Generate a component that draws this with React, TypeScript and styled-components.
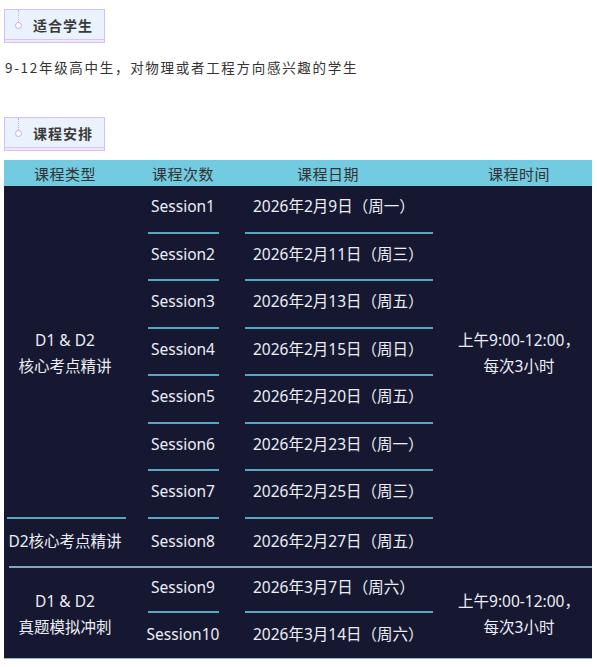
import { createGlobalStyle } from "styled-components";
import styled from "styled-components";

const GlobalStyle = createGlobalStyle`
  body {
    margin: 0;
    background: #ffffff;
    font-family: "Noto Sans CJK SC", "Noto Sans", sans-serif;
  }
`;

const Page = styled.div`
  width: 597px;
  box-sizing: border-box;
  padding: 9px 5px 9px 4px;
`;

// section heading with the little dotted marker
const TitleBox = styled.div`
  width: 101px;
  height: 34px;
  box-sizing: border-box;
  border: 1px solid #d5bff6;
  background: linear-gradient(
    to bottom,
    #eaf3fd calc(100% - 3px),
    #d9c4f7 calc(100% - 3px),
    #d9c4f7 calc(100% - 2px),
    #f4e8fc calc(100% - 2px)
  );
  display: flex;
  align-items: flex-start;
  gap: 11px;
  padding-left: 10px;
`;

const Marker = styled.div`
  display: flex;
  flex-direction: column;
  align-items: center;
  width: 7px;
`;

const DotLine = styled.div`
  width: 0;
  height: 12px;
  border-left: 1px dotted #c9a9f2;
`;

const Ring = styled.div`
  width: 7px;
  height: 7px;
  box-sizing: border-box;
  border-radius: 50%;
  border: 1px solid #c9a9f2;
  background: #ffffff;
`;

const TitleText = styled.div`
  margin-top: 5px;
  font-size: 14px;
  font-weight: bold;
  letter-spacing: 1px;
  color: #3a3a3a;
  line-height: 20px;
`;

const Intro = styled.p`
  margin: 13px 0 39px 1px;
  font-size: 13.5px;
  line-height: 22px;
  letter-spacing: 1.7px;
  color: #333333;
`;

const Table = styled.div`
  margin-top: 9px;
  display: grid;
  grid-template-columns: 122px 114px 206px 146px;
  grid-template-rows: 26px repeat(8, 47.5px) 2px 45px 45px;
  background: #161832;
  border-bottom: 1px solid #8fb9cc;
  color: #eceef4;
  font-family: "Noto Sans", "Noto Sans CJK SC", sans-serif;
  font-size: 15.5px;
`;

const HeadCell = styled.div<{ $shift?: number }>`
  background: #72cbe0;
  color: #333333;
  display: flex;
  align-items: center;
  justify-content: center;
  padding-right: ${(p) => p.$shift ?? 0}px;
  font-family: "Noto Sans CJK SC", sans-serif;
  font-size: 15px;
  letter-spacing: 0.5px;
`;

const Cell = styled.div<{ $col: number; $row: string }>`
  grid-column: ${(p) => p.$col};
  grid-row: ${(p) => p.$row};
  display: flex;
  flex-direction: column;
`;

const CellText = styled.div<{
  $align?: "left" | "center";
  $pad?: number;
  $lift?: number;
  $drop?: number;
}>`
  flex: 1;
  display: flex;
  flex-direction: column;
  justify-content: center;
  align-items: ${(p) => (p.$align === "left" ? "flex-start" : "center")};
  padding-left: ${(p) => p.$pad ?? 0}px;
  padding-bottom: ${(p) => p.$lift ?? 0}px;
  padding-top: ${(p) => p.$drop ?? 0}px;
  line-height: 26px;
  white-space: nowrap;
`;

const Rule = styled.div<{ $l: number; $r: number }>`
  height: 2px;
  margin: 0 ${(p) => p.$r}px 0 ${(p) => p.$l}px;
  background: #55a8c1;
`;

const Divider = styled.div`
  grid-column: 1 / -1;
  grid-row: 10;
  margin-left: 5px;
  background: #7fa7b9;
`;

const sessions = [
  "2026年2月9日（周一）",
  "2026年2月11日（周三）",
  "2026年2月13日（周五）",
  "2026年2月15日（周日）",
  "2026年2月20日（周五）",
  "2026年2月23日（周一）",
  "2026年2月25日（周三）",
  "2026年2月27日（周五）",
  "2026年3月7日（周六）",
  "2026年3月14日（周六）",
];

// grid row for a session index (header is row 1, divider row 10)
const rowOf = (i: number) => (i < 8 ? i + 2 : i + 3);

const Title = ({ children }: { children: string }) => (
  <TitleBox>
    <Marker>
      <DotLine />
      <Ring />
    </Marker>
    <TitleText>{children}</TitleText>
  </TitleBox>
);

export default function App() {
  return (
    <Page>
      <GlobalStyle />
      <Title>适合学生</Title>
      <Intro>9-12年级高中生，对物理或者工程方向感兴趣的学生</Intro>
      <Title>课程安排</Title>

      <Table>
        <HeadCell>课程类型</HeadCell>
        <HeadCell>课程次数</HeadCell>
        <HeadCell $shift={30}>课程日期</HeadCell>
        <HeadCell>课程时间</HeadCell>

        <Cell $col={1} $row="2 / 9">
          <CellText $drop={4}>
            <span>D1 &amp; D2</span>
            <span>核心考点精讲</span>
          </CellText>
          <Rule $l={3} $r={0} />
        </Cell>
        <Cell $col={1} $row="9">
          <CellText $lift={3}>D2核心考点精讲</CellText>
        </Cell>

        {sessions.map((date, i) => {
          const last = i === 7 || i === 9;
          return [
            <Cell key={`s${i}`} $col={2} $row={String(rowOf(i))}>
              <CellText $lift={last ? 3 : 5}>Session{i + 1}</CellText>
              {!last && <Rule $l={22} $r={21} />}
            </Cell>,
            <Cell key={`d${i}`} $col={3} $row={String(rowOf(i))}>
              <CellText $align="left" $pad={13} $lift={last ? 3 : 5}>
                {date}
              </CellText>
              {!last && <Rule $l={5} $r={13} />}
            </Cell>,
          ];
        })}

        <Cell $col={4} $row="2 / 9">
          <CellText $drop={2}>
            <span>上午9:00-12:00，</span>
            <span>每次3小时</span>
          </CellText>
        </Cell>

        <Divider />

        <Cell $col={1} $row="11 / 13">
          <CellText $drop={2}>
            <span>D1 &amp; D2</span>
            <span>真题模拟冲刺</span>
          </CellText>
        </Cell>
        <Cell $col={4} $row="11 / 13">
          <CellText $drop={2}>
            <span>上午9:00-12:00，</span>
            <span>每次3小时</span>
          </CellText>
        </Cell>
      </Table>
    </Page>
  );
}
